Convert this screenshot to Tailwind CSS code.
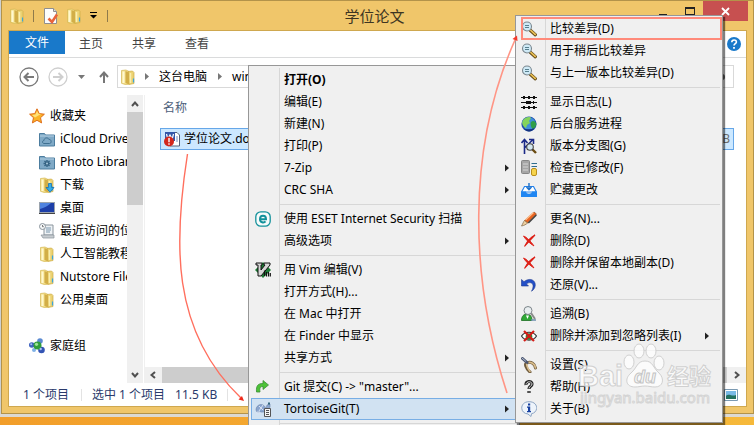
<!DOCTYPE html>
<html lang="zh-CN">

<head>
    <meta charset="UTF-8" />
    <meta name="viewport" content="width=device-width, initial-scale=1.0" />
    <title>学位论文</title>
    <script src="https://cdn.jsdelivr.net/npm/@tailwindcss/browser@4"></script>
    <style>
        body {
            font-family: 'Noto Sans', 'Noto Sans CJK SC', sans-serif;
        }
    </style>
</head>

<body class="relative h-screen overflow-hidden flex flex-col bg-linear-to-r from-[#f29e2a] to-[#f6b93a] text-xs text-black">

    <!-- shared icons -->
    <svg class="hidden">
        <symbol id="folder" viewBox="0 0 16 16">
            <path d="M1.500 1.500 6 1l3 1.500V15l-3 .8-4.500-1.500z" fill="#f3df8a" stroke="#d6b853" stroke-width=".7" />
            <path d="M8 2.500 12.500 2l1.500 1.500v11L9 15.500z" fill="#ecd272" stroke="#cdac46" stroke-width=".7" />
            <path d="M5.500 2 9 3.500v12L5.500 14z" fill="#d2ae47" />
            <path d="M3.500 2.500v11.500" stroke="#fff8d0" stroke-width="2" />
            <path d="M10.500 4v10" stroke="#faeeb0" stroke-width="1.500" />
            <path d="M13.500 9.500v4" stroke="#3aa5dc" stroke-width="1.200" />
        </symbol>
        <symbol id="bluefolder" viewBox="0 0 16 16">
            <path d="M.5 2.500h5l1 1.500h9v11H.5z" fill="#7fa9c6" stroke="#4c7d9f" />
            <path d="M1 5h14" stroke="#b5d0e2" />
        </symbol>
        <symbol id="lens" viewBox="0 0 16 16">
            <path d="m9 9 5.300 4.800" stroke="#5c4310" stroke-width="3.200" stroke-linecap="round" />
            <path d="m9.500 9.200 4.800 4.300" stroke="#e6bd54" stroke-width="1.700" stroke-linecap="round" />
            <circle cx="6" cy="5.500" r="4.500" fill="#cfeaf6" stroke="#7b878f" stroke-width="1.100" />
            <path d="M4 4.500h4M4 6.500h4" stroke="#58808f" />
        </symbol>
        <symbol id="redx" viewBox="0 0 16 16">
            <path d="M2.500 3c3 1 7.500 5.500 10.500 10-4-2.500-8.500-6.500-10.500-10z" fill="#e3231b" stroke="#dc2017" stroke-width=".9" />
            <path d="M14 2C10 4 6 8.500 3.500 13.500 6.500 10 10 6 14 2z" fill="#e3231b" stroke="#dc2017" stroke-width="1.100" />
        </symbol>
        <symbol id="more" viewBox="0 0 4 8">
            <path d="M0 .5 4 4 0 7.500z" fill="#222" />
        </symbol>
    </svg>

    <!-- explorer window -->
    <main class="flex-1 min-h-0 ml-px flex flex-col bg-[#f0c66a] border border-[#b3934a] shadow-[-1px_0_0_#cdd0d2]">
        <header class="flex h-[29px] shrink-0">
            <div class="flex items-center gap-2 pl-[7px]">
                <svg class="size-4"><use href="#folder" /></svg>
                <span class="w-px h-3 bg-[#8f7a4b]"></span>
                <button class="ml-px" aria-label="属性">
                    <svg class="size-4" viewBox="0 0 16 16">
                        <path d="M1.500.5h9l3 3v12h-12z" fill="#fdfdfd" stroke="#8f8f8f" />
                        <path d="M10.500.5v3h3" fill="#ddd" stroke="#8f8f8f" />
                        <path d="m5.500 10.500 3.500 3.500 5-7.500" fill="none" stroke="#e8643c" stroke-width="2.600" />
                    </svg>
                </button>
                <button class="-ml-px" aria-label="新建文件夹"><svg class="size-4"><use href="#folder" /></svg></button>
                <button aria-label="自定义快速访问工具栏">
                    <svg class="w-[7px] h-[7px]" viewBox="0 0 7 7"><path d="M0 0h7v1H0zM0 3h7L3.500 6.500z" /></svg>
                </button>
                <span class="w-px h-3 ml-0.5 bg-[#8f7a4b]"></span>
            </div>
            <h1 class="flex-1 pr-2 text-center text-[15px] leading-[30px] text-[#3d3522]">学位论文</h1>
            <div class="flex items-start mr-[5px]">
                <button class="w-[27px] h-5 flex justify-center items-center" aria-label="最小化">
                    <span class="w-2 h-0.5 mt-[7px] bg-[#222]"></span>
                </button>
                <button class="w-[27px] h-5 flex justify-center items-center" aria-label="最大化">
                    <span class="w-[10px] h-2 border border-t-2 border-[#222]"></span>
                </button>
                <button class="w-[45px] h-5 flex justify-center items-center bg-[#c75050]" aria-label="关闭">
                    <svg class="size-[9px]" viewBox="0 0 9 9"><path d="m1 1 7 7M8 1 1 8" stroke="#fff" stroke-width="1.800" /></svg>
                </button>
            </div>
        </header>

        <div class="flex-1 min-h-0 flex flex-col mx-[6px] mb-[6px] border border-[#cfa84f] bg-white">
            <!-- ribbon tabs -->
            <nav class="flex items-start h-[27px] shrink-0 border-b border-[#dadbdc] leading-[26px] text-[#444]">
                <button class="w-14 h-[23px] leading-[23px] bg-[#1979ca] text-white">文件</button>
                <div class="flex gap-px">
                    <button class="px-[14px]">主页</button>
                    <button class="px-[14px]">共享</button>
                    <button class="px-[14px]">查看</button>
                </div>
                <button class="ml-auto mr-[5px] mt-[6px]" aria-label="帮助">
                    <svg class="size-[14px]" viewBox="0 0 14 14">
                        <circle cx="7" cy="7" r="7" fill="#1979ca" />
                        <path d="M4.800 5.300c0-3 4.600-3 4.600-.3C9.400 6.700 7 6.700 7 8.600" fill="none" stroke="#fff" stroke-width="1.600" />
                        <path d="M6.100 10h1.800v1.700H6.100z" fill="#fff" />
                    </svg>
                </button>
            </nav>

            <!-- address row -->
            <div class="flex items-center h-[37px] shrink-0 pl-[10px] pr-3">
                <button aria-label="后退">
                    <svg class="size-5" viewBox="0 0 20 20" fill="none" stroke="#7a7a7a">
                        <circle cx="10" cy="10" r="9" stroke-width="1.300" />
                        <path d="M15 10H6M9.500 6 5.500 10l4 4" stroke-width="2" />
                    </svg>
                </button>
                <button class="ml-[9px]" aria-label="前进">
                    <svg class="size-5" viewBox="0 0 20 20" fill="none" stroke="#cfcfcf">
                        <circle cx="10" cy="10" r="9" stroke-width="1.300" />
                        <path d="M5 10h9M10.500 6l4 4-4 4" stroke-width="2" />
                    </svg>
                </button>
                <button class="ml-[10px]" aria-label="最近位置">
                    <svg class="w-[7px] h-1" viewBox="0 0 7 4"><path d="M0 0h7L3.500 4z" fill="#777" /></svg>
                </button>
                <button class="ml-[14px]" aria-label="向上">
                    <svg class="w-[10px] h-3" viewBox="0 0 10 12" fill="none" stroke="#777" stroke-width="2">
                        <path d="M5 12V2M1 6l4-4.500L9 6" />
                    </svg>
                </button>
                <div class="ml-2 flex-1 flex items-center h-[23px] border border-[#d9d9d9] pl-0.5 pr-2">
                    <svg class="size-4"><use href="#folder" /></svg>
                    <svg class="ml-[9px] w-1 h-[7px]" viewBox="0 0 4 7"><path d="M0 0 4 3.500 0 7z" fill="#777" /></svg>
                    <button class="ml-[10px]">这台电脑</button>
                    <svg class="ml-[11px] w-1 h-[7px]" viewBox="0 0 4 7"><path d="M0 0 4 3.500 0 7z" fill="#777" /></svg>
                    <button class="ml-[10px]">win</button>
                    <span class="ml-auto size-[6px] rounded-full border-2 border-[#666]"></span>
                </div>
            </div>

            <div class="flex-1 min-h-0 flex">
                <!-- navigation pane -->
                <aside class="w-[118px] shrink-0 overflow-hidden pt-[9px] whitespace-nowrap leading-[23px]">
                    <a href="#" class="flex items-center gap-[5px] pl-5">
                        <svg class="size-4 shrink-0" viewBox="0 0 16 16">
                            <path d="m8 .8 2.200 4.800 5.200.6-3.900 3.500 1.100 5.200L8 12.300l-4.600 2.600 1.100-5.200L.6 6.200l5.200-.6z" fill="#fbb427" stroke="#de6d1b" />
                            <path d="M8 3 6.500 6.500 3 7l3 2.500 6-3.500-2.500-.3z" fill="#ffe27a" />
                        </svg>
                        收藏夹
                    </a>
                    <a href="#" class="flex items-center gap-[5px] pl-[30px]">
                        <svg class="size-4 shrink-0" viewBox="0 0 16 16">
                            <use href="#bluefolder" />
                            <path d="M5 12.500c-2 0-2-3 0-3 0-3 4-3.500 5-1 2.500-.5 3 4 .5 4z" fill="none" stroke="#3f6f90" />
                        </svg>
                        iCloud Drive
                    </a>
                    <a href="#" class="flex items-center gap-[5px] pl-[30px]">
                        <svg class="size-4 shrink-0" viewBox="0 0 16 16">
                            <use href="#bluefolder" />
                            <path d="M8 6v7M4.500 9.500h7M5.500 7l5 5M10.500 7l-5 5" stroke="#356383" stroke-width="1.400" />
                            <circle cx="8" cy="9.500" r="1" fill="#a9c8dc" />
                        </svg>
                        Photo Library
                    </a>
                    <a href="#" class="flex items-center gap-[5px] pl-[30px]">
                        <svg class="size-4 shrink-0" viewBox="0 0 16 16">
                            <use href="#folder" />
                            <path d="M9.500 6.500h3v4h2.500l-4 4.800L7 10.500h2.500z" fill="#33aeea" stroke="#166fae" stroke-width=".8" />
                        </svg>
                        下载
                    </a>
                    <a href="#" class="flex items-center gap-[5px] pl-[30px]">
                        <svg class="size-4 shrink-0" viewBox="0 0 16 16">
                            <path d="M0 2h16v11H0z" fill="#9aa3ad" />
                            <path d="M1 3h14v9H1z" fill="#1d3fa8" />
                            <path d="M1 3h11C9 6 5 8 1 9z" fill="#4f83e0" />
                            <path d="M0 13h16v1H0z" fill="#444" />
                        </svg>
                        桌面
                    </a>
                    <a href="#" class="flex items-center gap-[5px] pl-[30px]">
                        <svg class="size-4 shrink-0" viewBox="0 0 16 16">
                            <path d="M5 2h9v10H5z" fill="#eef2f5" stroke="#8a949c" />
                            <path d="M7 5h5M7 7h5M7 9h4" stroke="#7b97ad" />
                            <path d="M2 12h13v3H4z" fill="#c7ccd0" stroke="#8a949c" stroke-width=".7" />
                            <circle cx="3.500" cy="3.500" r="3" fill="#f5f7f8" stroke="#8a949c" />
                            <path d="M3.500 2v1.700h1.300" fill="none" stroke="#555" stroke-width=".8" />
                        </svg>
                        最近访问的位置
                    </a>
                    <a href="#" class="flex items-center gap-[5px] pl-[30px]">
                        <svg class="size-4 shrink-0"><use href="#folder" /></svg>
                        人工智能教程
                    </a>
                    <a href="#" class="flex items-center gap-[5px] pl-[30px]">
                        <svg class="size-4 shrink-0"><use href="#folder" /></svg>
                        Nutstore Files
                    </a>
                    <a href="#" class="flex items-center gap-[5px] pl-[30px]">
                        <svg class="size-4 shrink-0"><use href="#folder" /></svg>
                        公用桌面
                    </a>
                    <a href="#" class="mt-[23px] flex items-center gap-[5px] pl-5">
                        <svg class="size-4 shrink-0" viewBox="0 0 16 16">
                            <circle cx="11" cy="3" r="2.800" fill="#5b8bd2" />
                            <circle cx="2.800" cy="7" r="2.800" fill="#3e62c0" />
                            <circle cx="12.500" cy="12" r="3.300" fill="#3354b4" />
                            <circle cx="5" cy="12" r="2" fill="#7fb1e6" />
                            <circle cx="8.500" cy="7.500" r="4" fill="#2f9d3a" />
                            <circle cx="7.500" cy="6.300" r="1.600" fill="#9ee29a" />
                            <circle cx="11.700" cy="11" r="1.200" fill="#a9c3f0" />
                            <circle cx="2.200" cy="6.200" r="1" fill="#a9c3f0" />
                        </svg>
                        家庭组
                    </a>
                </aside>
                <div class="w-4 shrink-0 flex flex-col items-center bg-[#f0f0f0]">
                    <svg class="h-[17px] w-2" viewBox="0 0 8 17" fill="none" stroke="#505050" stroke-width="2"><path d="m1 11 3-3.500L7 11" /></svg>
                    <div class="w-full h-[93px] bg-[#cdcdcd]"></div>
                    <svg class="mt-auto h-[17px] w-2" viewBox="0 0 8 17" fill="none" stroke="#505050" stroke-width="2"><path d="m1 7 3 3.500L7 7" /></svg>
                </div>

                <!-- file list -->
                <section class="flex-1 min-w-0 flex flex-col ml-px border-l border-[#f0f0f0]">
                    <div class="flex-1 min-h-0 pl-[15px] pr-3">
                        <table class="w-full border-separate border-spacing-0">
                            <thead>
                                <tr class="h-[33px] text-[#4c607a]">
                                    <th class="pl-[3px] pb-[7px] text-left font-normal">名称</th>
                                    <th class="font-normal"></th>
                                </tr>
                            </thead>
                            <tbody>
                                <tr class="h-[22px] bg-[#cce8ff]">
                                    <td class="border-y border-l border-[#66a7e8] pl-[3px]">
                                        <div class="flex items-center gap-1">
                                            <svg class="size-4" viewBox="0 0 16 16">
                                                <path d="M8 1.500h5l2.500 2.500v11H6V3z" fill="#fff" stroke="#56627a" />
                                                <path d="M1 1h10v9H1z" fill="#3156a8" />
                                                <path d="m2.500 3 1.300 5L6 4l2.200 4 1.300-5" fill="none" stroke="#fff" stroke-width="1.200" />
                                                <path d="M12 6h2M12 8h2M12 10h2" stroke="#6f8bc0" />
                                                <circle cx="5" cy="10.500" r="5" fill="#d2281e" />
                                                <path d="M4.300 7h1.400v4.300H4.300zM4.300 12.200h1.400v1.500H4.300z" fill="#fff" />
                                            </svg>
                                            学位论文.docx
                                        </div>
                                    </td>
                                    <td class="border-y border-r border-[#66a7e8] pr-[3px] text-right text-[#6d6d6d]">12 KB</td>
                                </tr>
                            </tbody>
                        </table>
                    </div>
                    <div class="flex items-center h-4 shrink-0 bg-[#f0f0f0]">
                        <svg class="w-[17px] h-2" viewBox="0 0 17 8" fill="none" stroke="#505050" stroke-width="2"><path d="M10 1 6.500 4 10 7" /></svg>
                        <div class="flex-1 h-full bg-[#cdcdcd]"></div>
                        <svg class="w-[19px] h-2" viewBox="0 0 19 8" fill="none" stroke="#505050" stroke-width="2"><path d="m8 1 3.500 3L8 7" /></svg>
                    </div>
                </section>
            </div>

            <!-- status bar -->
            <footer class="flex items-center h-[23px] shrink-0 pl-[14px] pr-2 text-[#2a3a6b]">
                <span>1 个项目</span>
                <span class="ml-3 w-px h-3 bg-[#e3e3e3]"></span>
                <span class="ml-[10px]">选中 1 个项目</span>
                <span class="ml-[10px]">11.5 KB</span>
                <span class="ml-[10px] w-px h-3 bg-[#e3e3e3]"></span>
                <button class="ml-auto" aria-label="大缩略图">
                    <svg class="w-[14px] h-3" viewBox="0 0 14 12">
                        <path d="M.5.5h13v11H.5z" fill="#fff" stroke="#7b9ab2" />
                        <path d="M2 2h10v8H2z" fill="#79b9e6" />
                        <path d="M2 7c3-3 6 1 10-1v4H2z" fill="#23705f" />
                    </svg>
                </button>
            </footer>
        </div>
    </main>
    <div class="h-[3px] shrink-0 bg-[#dcd9d2]"></div>
    <div class="h-2 shrink-0"></div>

    <!-- context menu -->
    <div role="menu" class="absolute left-[248px] top-[65px] w-[272px] px-0.5 pt-[3px] pb-1 bg-[#f0f0f0] border border-[#979797]">
        <div class="absolute left-[30px] top-0.5 bottom-0 w-px bg-[#d7d7d7]"></div>
        <div class="relative leading-5 whitespace-nowrap">
            <button role="menuitem" class="flex items-center w-full h-[22px] pl-8 border border-transparent font-bold">打开(O)</button>
            <button role="menuitem" class="flex items-center w-full h-[22px] pl-8 border border-transparent">编辑(E)</button>
            <button role="menuitem" class="flex items-center w-full h-[22px] pl-8 border border-transparent">新建(N)</button>
            <button role="menuitem" class="flex items-center w-full h-[22px] pl-8 border border-transparent">打印(P)</button>
            <button role="menuitem" class="flex items-center w-full h-[22px] pl-8 pr-[7px] border border-transparent">7-Zip<svg class="ml-auto w-1 h-2"><use href="#more" /></svg></button>
            <button role="menuitem" class="flex items-center w-full h-[22px] pl-8 pr-[7px] border border-transparent">CRC SHA<svg class="ml-auto w-1 h-2"><use href="#more" /></svg></button>
            <hr class="ml-7 my-[3px] border-[#d7d7d7]" />
            <button role="menuitem" class="flex items-center gap-[13px] w-full h-[22px] pl-[3px] border border-transparent">
                <svg class="size-4" viewBox="0 0 16 16" fill="none" stroke="#13919b">
                    <rect x=".8" y=".8" width="14.400" height="14.400" rx="5" fill="#f7fbfb" stroke-width="1.300" />
                    <path d="M5 8.200h6c0-4.500-6-4.500-6 0 0 3.500 4 4 5.500 2.200" stroke-width="2" />
                </svg>
                使用 ESET Internet Security 扫描
            </button>
            <button role="menuitem" class="flex items-center w-full h-[22px] pl-8 pr-[7px] border border-transparent">高级选项<svg class="ml-auto w-1 h-2"><use href="#more" /></svg></button>
            <hr class="ml-7 my-[3px] border-[#d7d7d7]" />
            <button role="menuitem" class="flex items-center gap-[13px] w-full h-[22px] pl-[3px] border border-transparent">
                <svg class="size-4" viewBox="0 0 16 16">
                    <path d="m8 0 8 8-8 8-8-8z" fill="#1c7a34" />
                    <path d="M1 1h6v2H6v5l4-5H9V1h6v2L6 14H3V3H1z" fill="#d6d6d6" stroke="#111" />
                    <path d="M9.500 8.500v5.500M11.500 14.500V10M13.500 14.500V10M15.300 14.500V11" fill="none" stroke="#111" stroke-width="1.200" />
                </svg>
                用 Vim 编辑(V)
            </button>
            <button role="menuitem" class="flex items-center w-full h-[22px] pl-8 border border-transparent">打开方式(H)...</button>
            <button role="menuitem" class="flex items-center w-full h-[22px] pl-8 border border-transparent">在 Mac 中打开</button>
            <button role="menuitem" class="flex items-center w-full h-[22px] pl-8 border border-transparent">在 Finder 中显示</button>
            <button role="menuitem" class="flex items-center w-full h-[22px] pl-8 pr-[7px] border border-transparent">共享方式<svg class="ml-auto w-1 h-2"><use href="#more" /></svg></button>
            <hr class="ml-7 my-[3px] border-[#d7d7d7]" />
            <button role="menuitem" class="flex items-center gap-[13px] w-full h-[22px] pl-[3px] border border-transparent">
                <svg class="size-4" viewBox="0 0 16 16">
                    <path d="M1.500 13C1 6.500 3 4.500 8 4.500V1.500L13.500 6 8 10.500v-3c-3 0-3.500 1.500-3 5.500z" fill="#4cc237" stroke="#3c8e37" stroke-width=".8" />
                </svg>
                Git 提交(C) -&gt; "master"...
            </button>
            <button role="menuitem" class="flex items-center gap-[13px] w-full h-[22px] pl-[3px] pr-[7px] bg-[#d1e2f2] border border-[#78aee5]">
                <svg class="size-4" viewBox="0 0 16 16">
                    <path d="M1 9c0-6 8-8 10-1l1-4 3-1v3l-3 5H2z" fill="#8ba6cf" stroke="#6d83a8" stroke-width=".6" />
                    <path d="M2 11h3v2H1zM4 5l4 4M8 4 4 10" fill="none" stroke="#d8e3f3" />
                    <path d="M13 1.500h2v2h-2z" fill="#31667d" />
                    <path d="M9.500 7.500h6v8h-6z" fill="#f5f5f5" stroke="#555" />
                    <path d="M11 9.500h3M11 11.500h3M11 13.500h3" stroke="#555" />
                </svg>
                TortoiseGit(T)
                <svg class="ml-auto w-1 h-2"><use href="#more" /></svg>
            </button>
            <hr class="ml-7 my-[3px] border-[#d7d7d7]" />
        </div>
    </div>

    <!-- TortoiseGit submenu -->
    <div role="menu" class="absolute left-[515px] top-[15px] w-[208px] px-0.5 py-0.5 bg-[#f0f0f0] border border-[#979797] shadow-[2px_2px_1px_#00000080]">
        <div class="absolute left-[29px] top-0.5 bottom-0.5 w-px bg-[#d7d7d7]"></div>
        <div class="relative leading-5 whitespace-nowrap">
            <button role="menuitem" class="flex items-center gap-[13px] w-full h-[22px] pl-0.5 border border-transparent"><svg class="size-4"><use href="#lens" /></svg>比较差异(D)</button>
            <button role="menuitem" class="flex items-center gap-[13px] w-full h-[22px] pl-0.5 border border-transparent"><svg class="size-4"><use href="#lens" /></svg>用于稍后比较差异</button>
            <button role="menuitem" class="flex items-center gap-[13px] w-full h-[22px] pl-0.5 border border-transparent"><svg class="size-4"><use href="#lens" /></svg>与上一版本比较差异(D)</button>
            <hr class="ml-7 my-[3px] border-[#d7d7d7]" />
            <button role="menuitem" class="flex items-center gap-[13px] w-full h-[22px] pl-0.5 border border-transparent">
                <svg class="size-4" viewBox="0 0 16 16" stroke="#111">
                    <path d="M0 3.500h16M0 8.500h16M0 13.500h16" stroke-width="1.200" />
                    <path d="M2 3.500h2M7 3.500h2M12 3.500h2M5 8.500h5M12 8.500h1M2 13.500h2M7 13.500h2M12 13.500h2" stroke-width="3" />
                </svg>
                显示日志(L)
            </button>
            <button role="menuitem" class="flex items-center gap-[13px] w-full h-[22px] pl-0.5 border border-transparent">
                <svg class="size-4" viewBox="0 0 16 16">
                    <circle cx="8" cy="8" r="7.600" fill="#1f4fae" />
                    <path d="M1 6c2-5 9-7 13-1l-3 8H4z" fill="#3f8fd8" />
                    <path d="M3 3c2-2 6-3 7-1L8 5l1 2-3 2-1 3C1 10 0 6 3 3z" fill="#84d35c" />
                    <path d="M10 6c2-2 4-1 5 1s-1 5-3 6c-2-1-3-5-2-7z" fill="#2f9e49" />
                    <path d="M3 12c3 2 7 2 10 0-1 4-8 5-10 0z" fill="#15327e" />
                </svg>
                后台服务进程
            </button>
            <button role="menuitem" class="flex items-center gap-[13px] w-full h-[22px] pl-0.5 border border-transparent">
                <svg class="size-4" viewBox="0 0 16 16">
                    <path d="M3.500 16V2M.5 5 3.500 1.500 6.500 5M3.500 10l8-8M8 1.500h4.500V6" fill="none" stroke="#1b2a88" stroke-width="1.600" />
                    <path d="m11.500 11.500 3.500 3.500" stroke="#6b4c12" stroke-width="2.400" />
                    <circle cx="9" cy="9" r="3.300" fill="#d3e7f0" stroke="#444" stroke-width="1.100" />
                </svg>
                版本分支图(G)
            </button>
            <button role="menuitem" class="flex items-center gap-[13px] w-full h-[22px] pl-0.5 border border-transparent">
                <svg class="size-4" viewBox="0 0 16 16">
                    <rect x=".5" y=".5" width="8" height="13" rx="1" fill="#a5a5a5" stroke="#858585" />
                    <path d="M2 4h5M2 7h5M2 10h5" stroke="#d5d5d5" />
                    <path d="M10.500 3.500H16M10.500 6.500H16" stroke="#2f6d8e" />
                    <rect x="10.500" y="8.500" width="5" height="7" rx="1.500" fill="#f6d34c" stroke="#b98f1d" />
                </svg>
                检查已修改(F)
            </button>
            <button role="menuitem" class="flex items-center gap-[13px] w-full h-[22px] pl-0.5 border border-transparent">
                <svg class="size-4" viewBox="0 0 16 16">
                    <path d="M3.500 4.500h9L15.500 10H.5z" fill="#fff" stroke="#2582ea" stroke-width="1.200" />
                    <path d="M0 9.500h5c0 3 6 3 6 0h5V15H0z" fill="#1f86f2" />
                    <path d="M8 1v6M5.500 5 8 7.800 10.500 5" fill="none" stroke="#1d6fc8" stroke-width="1.400" />
                </svg>
                贮藏更改
            </button>
            <hr class="ml-7 my-[3px] border-[#d7d7d7]" />
            <button role="menuitem" class="flex items-center gap-[13px] w-full h-[22px] pl-0.5 border border-transparent">
                <svg class="size-4" viewBox="0 0 16 16">
                    <path d="M13 1 15.500 3 6.500 12 3.500 9.500z" fill="#ea6420" stroke="#8e4317" stroke-width=".6" />
                    <path d="m12.500 1.500-8 7.500" stroke="#ffc08f" stroke-width="1.200" />
                    <path d="m15.300 4-8 8" stroke="#444" stroke-width="1.600" />
                    <path d="M3.500 9.500c-1 1-1.500 3-3 5.500 2.500-.5 4.500-1.500 6-3z" fill="#edcfa0" stroke="#7e6545" stroke-width=".7" />
                </svg>
                更名(N)...
            </button>
            <button role="menuitem" class="flex items-center gap-[13px] w-full h-[22px] pl-0.5 border border-transparent"><svg class="size-4"><use href="#redx" /></svg>删除(D)</button>
            <button role="menuitem" class="flex items-center gap-[13px] w-full h-[22px] pl-0.5 border border-transparent"><svg class="size-4"><use href="#redx" /></svg>删除并保留本地副本(D)</button>
            <button role="menuitem" class="flex items-center gap-[13px] w-full h-[22px] pl-0.5 border border-transparent">
                <svg class="size-4" viewBox="0 0 16 16">
                    <path d="M.5 2.500V9h7L5.500 7c3-2.500 6-1.300 6.500 1.200.3 2-.3 3.800-1.500 6 3-1.700 4.300-5 3.600-7.700C13 2 7.500 1 3 4.700z" fill="#2450c8" stroke="#17358f" stroke-width=".6" />
                </svg>
                还原(V)...
            </button>
            <hr class="ml-7 my-[3px] border-[#d7d7d7]" />
            <button role="menuitem" class="flex items-center gap-[13px] w-full h-[22px] pl-0.5 border border-transparent">
                <svg class="size-4" viewBox="0 0 16 16">
                    <path d="M.5 14.500C.5 10 3 8 6 8s5 2.500 5 6.500z" fill="#2fa836" stroke="#1c6f22" stroke-width=".8" />
                    <path d="m10 7 4 6" stroke="#8a8a8a" stroke-width="2" />
                    <circle cx="7" cy="4.500" r="4" fill="#e9eef0" stroke="#7d858a" />
                    <path d="M5 9.500 6.500 13 8 9.500z" fill="#fff" />
                    <path d="M10 14h5" stroke="#6d8fae" stroke-width="1.500" />
                </svg>
                追溯(B)
            </button>
            <button role="menuitem" class="flex items-center gap-[13px] w-full h-[22px] pl-0.5 pr-[10px] border border-transparent">
                <svg class="size-4" viewBox="0 0 16 16">
                    <path d="M.5 8C4 3 12 3 15.500 8 12 13.500 4 13.500.5 8z" fill="#fff" stroke="#333" stroke-width="1.200" />
                    <circle cx="8" cy="8.500" r="3.300" fill="#2a8a3c" />
                    <path d="m3 3 10 10M13 3 3 13" stroke="#d41d17" stroke-width="2.200" />
                </svg>
                删除并添加到忽略列表(I)
                <svg class="ml-auto w-1 h-2"><use href="#more" /></svg>
            </button>
            <hr class="ml-7 my-[3px] border-[#d7d7d7]" />
            <button role="menuitem" class="flex items-center gap-[13px] w-full h-[22px] pl-0.5 border border-transparent">
                <svg class="size-4" viewBox="0 0 16 16" fill="none" stroke-linecap="round">
                    <path d="M6 6c-3 0-1 6 3 9M6 6c4-2 8 1 8.500 5" stroke="#6e5a3c" stroke-width="3" />
                    <path d="M6 6c-1 0 0 5 3 8.500M6 6c4-2 8 1 8.500 5" stroke="#d9bd8c" stroke-width="1.600" />
                    <path d="M1.500 1.500 6 5.500" stroke="#4c566e" stroke-width="3" />
                    <path d="m1 1 3.500 3" stroke="#b5c0d6" stroke-width="1" />
                </svg>
                设置(S)
            </button>
            <button role="menuitem" class="flex items-center gap-[13px] w-full h-[22px] pl-0.5 border border-transparent">
                <svg class="size-4" viewBox="0 0 16 16" fill="none">
                    <path d="M5 6c-.5-4.500 6-4.500 6-1 0 2.500-3 2-3 5M8 12v2" stroke="#222" stroke-width="3.200" />
                    <path d="M5 5.500c.3-3.500 6-3.500 6-.5 0 2.500-3 2-3 4.500M8 12.500v1" stroke="#ddd" stroke-width="1" />
                </svg>
                帮助(H)
            </button>
            <button role="menuitem" class="flex items-center gap-[13px] w-full h-[22px] pl-0.5 border border-transparent">
                <svg class="size-4" viewBox="0 0 16 16">
                    <path d="M8 .7c10 0 9.500 11 2.500 12l-.5 2.800L7 13C-1.500 12.500-1.500.7 8 .7z" fill="#eef4fb" stroke="#8ea6c4" />
                    <path d="M7 2.500h2.200v2H7zM6 5.500h3.200V10H10v1.200H6V10h1V6.700H6z" fill="#1740a0" />
                </svg>
                关于(B)
            </button>
        </div>
    </div>

    <!-- annotation arrows -->
    <svg class="absolute left-0 top-0 w-[754px] h-[425px] pointer-events-none" viewBox="0 0 754 425" fill="none">
        <path d="M187.500 154C174 240 170 330 241 398" stroke="#ff6f5e" stroke-width="1.400" />
        <path d="m244 401-5.500-1.500 3.500-3.500z" fill="#ee2a1c" />
        <path d="M507 393C470 280 466 150 515 40" stroke="#ff9585" stroke-width="1.600" />
        <path d="m517 35.500.5 5.500-5-2z" fill="#f4392b" />
        <rect x="522" y="18" width="199" height="21" stroke="#ff8a7a" stroke-width="2" />
    </svg>

    <!-- watermark -->
    <svg class="absolute left-[576px] top-[340px] w-[144px] h-[70px] pointer-events-none" viewBox="0 0 144 70" fill="#fff" fill-opacity=".7" stroke="#d0d0d0" stroke-width="1">
        <text x="2" y="46" font-family="Liberation Sans" font-weight="bold" font-size="29">Bai</text>
        <ellipse cx="53" cy="22" rx="5" ry="7" />
        <ellipse cx="63" cy="11" rx="5" ry="7" />
        <ellipse cx="75" cy="11" rx="5" ry="7" />
        <ellipse cx="83" cy="23" rx="5" ry="7" />
        <path d="M69 21c8 0 8 7 14 12 6 6 4 14-4 14-4 0-6-1-10-1s-6 1-10 1c-9 0-11-8-4-14 6-5 6-12 14-12z" />
        <text x="58" y="43" font-family="Liberation Sans" font-weight="bold" font-style="italic" font-size="18" fill="#f4f4f4" stroke="#c4c4c4">du</text>
        <text x="91" y="44" font-family="Noto Sans CJK SC" font-weight="bold" font-size="22">经验</text>
        <text x="4" y="63" font-family="Noto Sans" font-size="15" stroke="#d4d4d4">jingyan.baidu.com</text>
    </svg>
</body>

</html>
